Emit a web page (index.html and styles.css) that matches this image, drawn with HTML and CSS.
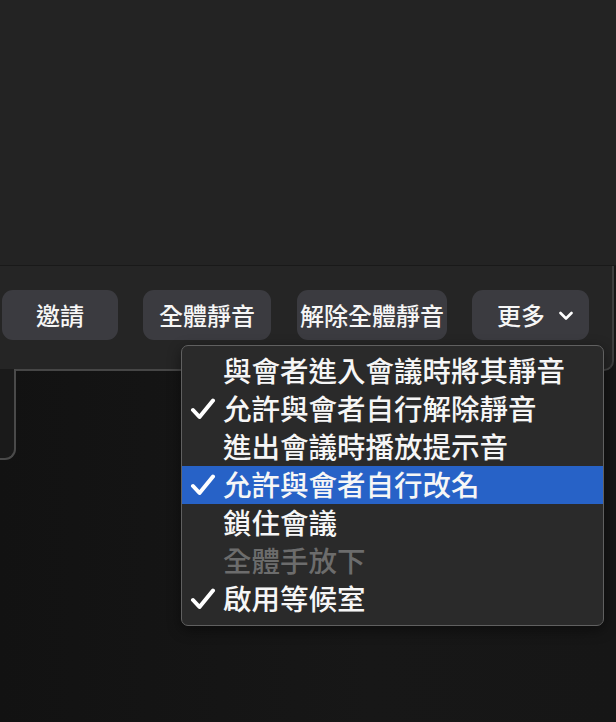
FILE: index.html
```html
<!DOCTYPE html>
<html lang="zh-Hant">
<head>
<meta charset="utf-8">
<title>更多</title>
<link rel="stylesheet" href="styles.css">
</head>
<body>
<div class="screen">
  <div class="top"></div>
  <div class="toolbar">
    <button class="btn btn-invite">邀請</button>
    <button class="btn btn-mute">全體靜音</button>
    <button class="btn btn-unmute">解除全體靜音</button>
    <button class="btn btn-more">更多<svg class="chev" width="14" height="10" viewBox="0 0 14 10"><polyline points="1.5,2 7,7.5 12.5,2" fill="none" stroke="#ffffff" stroke-width="2.6" stroke-linecap="round" stroke-linejoin="round"/></svg></button>
  </div>
  <div class="lower">
    <div class="card"></div>
  </div>

  <div class="menu">
    <div class="item"><span class="check"></span><span class="label">與會者進入會議時將其靜音</span></div>
    <div class="item"><span class="check"><svg width="26" height="22" viewBox="0 0 26 22"><polyline points="3,12 9.5,19 23,2.5" fill="none" stroke="#ffffff" stroke-width="4" stroke-linecap="round" stroke-linejoin="round"/></svg></span><span class="label">允許與會者自行解除靜音</span></div>
    <div class="item"><span class="check"></span><span class="label">進出會議時播放提示音</span></div>
    <div class="item selected"><span class="check"><svg width="26" height="22" viewBox="0 0 26 22"><polyline points="3,12 9.5,19 23,2.5" fill="none" stroke="#ffffff" stroke-width="4" stroke-linecap="round" stroke-linejoin="round"/></svg></span><span class="label">允許與會者自行改名</span></div>
    <div class="item"><span class="check"></span><span class="label">鎖住會議</span></div>
    <div class="item disabled"><span class="check"></span><span class="label">全體手放下</span></div>
    <div class="item"><span class="check"><svg width="26" height="22" viewBox="0 0 26 22"><polyline points="3,12 9.5,19 23,2.5" fill="none" stroke="#ffffff" stroke-width="4" stroke-linecap="round" stroke-linejoin="round"/></svg></span><span class="label">啟用等候室</span></div>
  </div>
</div>
</body>
</html>
```

FILE: styles.css
```css
* { box-sizing: border-box; }
html, body {
  margin: 0;
  padding: 0;
  background: #151515;
}
body {
  width: 616px;
  height: 722px;
  overflow: hidden;
  font-family: "Noto Sans CJK TC", "Noto Sans CJK SC", "Noto Sans", sans-serif;
  color: #f4f4f4;
}
.screen {
  position: relative;
  width: 616px;
  height: 722px;
  display: flex;
  flex-direction: column;
  background: #161616;
}
.top {
  height: 266px;
  background: #232323;
  border-bottom: 1px solid #191919;
  flex: none;
}
.toolbar {
  flex: none;
  width: 614px;
  height: 105px;
  background: #252525;
  border-right: 2px solid #3e3e3e;
  border-bottom: 2px solid #464646;
  border-bottom-right-radius: 10px;
  display: flex;
  align-items: flex-start;
  padding: 24px 0 0 2px;
  gap: 25px;
}
.btn {
  height: 50px;
  border: none;
  border-radius: 11px;
  background: #3b3b40;
  color: #f6f6f6;
  font-family: inherit;
  font-size: 24px;
  font-weight: 500;
  line-height: 50px;
  padding: 0;
  display: flex;
  align-items: center;
  justify-content: center;
  flex: none;
}
.btn-invite { width: 116px; }
.btn-mute { width: 128px; }
.btn-unmute { width: 150px; margin-left: 1px; }
.btn-more { width: 117px; justify-content: flex-start; padding-left: 25px; }
.chev { margin-left: 14px; margin-top: 2px; }

.lower {
  flex: 1;
  background: linear-gradient(90deg, #121212 0%, #171717 60%, #161616 100%);
}
.card {
  width: 16px;
  height: 91px;
  margin-top: -2px;
  background: #1a1a1a;
  border-right: 2px solid #4a4a4a;
  border-bottom: 2px solid #4a4a4a;
  border-bottom-right-radius: 11px;
}

.menu {
  position: absolute;
  left: 181px;
  top: 345px;
  width: 423px;
  height: 281px;
  background: #2a2a2a;
  border: 1px solid #606060;
  border-radius: 7px;
  padding: 6px 0 0 0;
  box-shadow: 0 4px 14px rgba(0,0,0,0.45);
}
.item {
  height: 38px;
  display: flex;
  align-items: center;
  font-size: 28.5px;
  font-weight: 500;
  line-height: 38px;
  color: #f6f6f6;
  white-space: nowrap;
}
.item .label { margin-top: -2px; }
.item .check {
  width: 41px;
  flex: none;
  display: flex;
  align-items: center;
  padding-left: 8px;
  height: 38px;
}
.item .check svg { display: block; }
.item.selected {
  background: #2762c7;
}
.item.disabled {
  color: #6c6c6c;
}
```
